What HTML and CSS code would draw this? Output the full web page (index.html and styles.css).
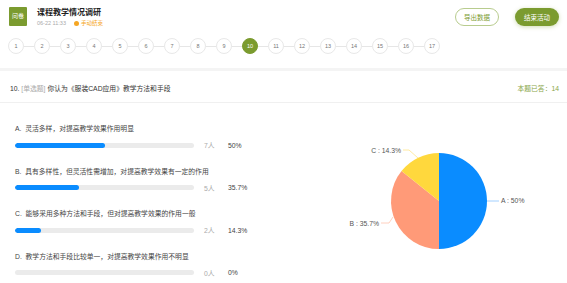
FILE: index.html
```html
<html>
<head>
     <title>课程教学情况调研</title>
     <link rel="stylesheet" href="styles.css">
</head>
<body>
     <div class="header">
          <div class="logo">问卷</div>
          <div class="title-box">
               <div class="title">课程教学情况调研</div>
               <div class="meta">
                    <span>06-22 11:33</span>
                    <span class="status"><span class="dot"></span>手动结束</span>
               </div>
          </div>
          <div class="actions">
               <button class="btn btn-outline">导出数据</button>
               <button class="btn btn-fill">结束活动</button>
          </div>
     </div>

     <div class="steps">
          <span class="step">1</span><span class="link"></span>
          <span class="step">2</span><span class="link"></span>
          <span class="step">3</span><span class="link"></span>
          <span class="step">4</span><span class="link"></span>
          <span class="step">5</span><span class="link"></span>
          <span class="step">6</span><span class="link"></span>
          <span class="step">7</span><span class="link"></span>
          <span class="step">8</span><span class="link"></span>
          <span class="step">9</span><span class="link"></span>
          <span class="step active">10</span><span class="link"></span>
          <span class="step">11</span><span class="link"></span>
          <span class="step">12</span><span class="link"></span>
          <span class="step">13</span><span class="link"></span>
          <span class="step">14</span><span class="link"></span>
          <span class="step">15</span><span class="link"></span>
          <span class="step">16</span><span class="link"></span>
          <span class="step">17</span>
     </div>

     <div class="divider"></div>

     <div class="question-head">
          <div class="question-title">10. <span class="qtype">[单选题]</span> 你认为《服装CAD应用》教学方法和手段</div>
          <div class="answered">本题已答：14</div>
     </div>

     <div class="content">
          <div class="options">
               <div class="option">
                    <div class="option-label">A.&nbsp; 灵活多样，对提高教学效果作用明显</div>
                    <div class="option-row">
                         <div class="bar"><div class="fill" style="width: 50%"></div></div>
                         <span class="count">7人</span>
                         <span class="pct">50%</span>
                    </div>
               </div>
               <div class="option">
                    <div class="option-label">B.&nbsp; 具有多样性，但灵活性需增加，对提高教学效果有一定的作用</div>
                    <div class="option-row">
                         <div class="bar"><div class="fill" style="width: 35.7%"></div></div>
                         <span class="count">5人</span>
                         <span class="pct">35.7%</span>
                    </div>
               </div>
               <div class="option">
                    <div class="option-label">C.&nbsp; 能够采用多种方法和手段，但对提高教学效果的作用一般</div>
                    <div class="option-row">
                         <div class="bar"><div class="fill" style="width: 14.3%"></div></div>
                         <span class="count">2人</span>
                         <span class="pct">14.3%</span>
                    </div>
               </div>
               <div class="option">
                    <div class="option-label">D.&nbsp; 教学方法和手段比较单一，对提高教学效果作用不明显</div>
                    <div class="option-row">
                         <div class="bar"><div class="fill" style="width: 0%"></div></div>
                         <span class="count">0人</span>
                         <span class="pct">0%</span>
                    </div>
               </div>
          </div>

          <svg class="chart" width="237" height="181" viewBox="330 102 237 181">
               <!-- A 50% -->
               <path d="M439 200 L439 152 A48 48 0 0 1 439 248 Z" fill="#0a8cff"/>
               <!-- B 35.7% -->
               <path d="M439 200 L439 248 A48 48 0 0 1 401.5 170.1 Z" fill="#ff9a78"/>
               <!-- C 14.3% -->
               <path d="M439 200 L401.5 170.1 A48 48 0 0 1 439 152 Z" fill="#ffd83d"/>

               <polyline points="487,200 499,200" fill="none" stroke="#8cc4ff" stroke-width="0.8"/>
               <polyline points="393,216 389,222 381,222" fill="none" stroke="#ffc4ae" stroke-width="0.8"/>
               <polyline points="418,157 409,149 403,149" fill="none" stroke="#ffe58a" stroke-width="0.8"/>

               <text x="501" y="202" class="chart-label">A : 50%</text>
               <text x="379" y="224.5" class="chart-label" text-anchor="end">B : 35.7%</text>
               <text x="401" y="151.5" class="chart-label" text-anchor="end">C : 14.3%</text>
          </svg>
     </div>
</body>
</html>
```

FILE: styles.css
```css
body {
     margin: 0;
     background-color: #fff;
     font-family: "Liberation Sans", "Noto Sans CJK SC", sans-serif;
     color: #333;
     width: 567px;
     height: 283px;
     overflow: hidden;
}

.header {
     display: flex;
     align-items: flex-start;
     padding: 7px 8px 0 9px;
     height: 24px;
}

.logo {
     width: 18px;
     height: 19px;
     background-color: #7b9b2f;
     color: #fff;
     font-size: 6px;
     line-height: 19px;
     text-align: center;
     border-radius: 1px;
}

.title-box {
     margin-left: 10px;
}

.title {
     font-size: 8px;
     font-weight: bold;
     line-height: 10px;
     margin-top: 1px;
     color: #222;
}

.meta {
     display: flex;
     align-items: center;
     font-size: 5.5px;
     color: #aaa;
     margin-top: 1px;
     line-height: 8px;
}

.status {
     display: flex;
     align-items: center;
     margin-left: 8px;
     color: #f5a623;
}

.dot {
     width: 5px;
     height: 5px;
     border-radius: 50%;
     background-color: #f5a623;
     margin-right: 2px;
}

.actions {
     margin-left: auto;
     display: flex;
     gap: 16px;
     margin-top: 1px;
}

.btn {
     width: 44px;
     height: 18px;
     border-radius: 9px;
     font-family: "Liberation Sans", "Noto Sans CJK SC", sans-serif;
     font-size: 6.5px;
     padding: 0;
     cursor: pointer;
}

.btn-outline {
     background-color: #fff;
     border: 1px solid #b8cc8e;
     color: #7b9b2f;
}

.btn-fill {
     background-color: #7b9b2f;
     border: none;
     color: #fff;
     box-shadow: 0 1px 4px rgba(123, 155, 47, 0.35);
}

.steps {
     display: flex;
     align-items: center;
     padding: 7px 0 0 8px;
     height: 16px;
}

.step {
     width: 14px;
     height: 14px;
     border: 1px solid #e8e8e8;
     border-radius: 50%;
     font-size: 5.5px;
     line-height: 14px;
     text-align: center;
     color: #777;
     flex: none;
}

.step.active {
     background-color: #7b9b2f;
     border-color: #7b9b2f;
     color: #fff;
}

.link {
     width: 10px;
     height: 1px;
     background-color: #e6e6e6;
     flex: none;
}

.divider {
     margin-top: 14px;
     height: 3px;
     background-color: #f4f4f4;
}

.question-head {
     display: flex;
     justify-content: space-between;
     align-items: center;
     padding: 13px 8px 8px 10px;
     border-bottom: 1px solid #f0f0f0;
     font-size: 6.8px;
     line-height: 10px;
}

.qtype {
     color: #aaa;
}

.answered {
     color: #8aa64a;
}

.content {
     display: flex;
}

.options {
     width: 330px;
     padding: 21px 0 0 15px;
     box-sizing: border-box;
}

.option {
     margin-bottom: 16.5px;
}

.option-label {
     font-size: 6.8px;
     line-height: 10px;
     color: #444;
}

.option-row {
     display: flex;
     align-items: center;
     height: 10px;
     margin-top: 6px;
     font-size: 6.8px;
}

.bar {
     width: 179px;
     height: 5px;
     border-radius: 3px;
     background-color: #ebebeb;
     overflow: hidden;
}

.fill {
     height: 100%;
     border-radius: 3px;
     background-color: #0a8cff;
}

.count {
     margin-left: 10px;
     width: 24px;
     color: #aaa;
}

.pct {
     color: #444;
}

.chart {
     flex: none;
}

.chart-label {
     font-size: 6.8px;
     fill: #555;
     font-family: "Liberation Sans", sans-serif;
}
```
